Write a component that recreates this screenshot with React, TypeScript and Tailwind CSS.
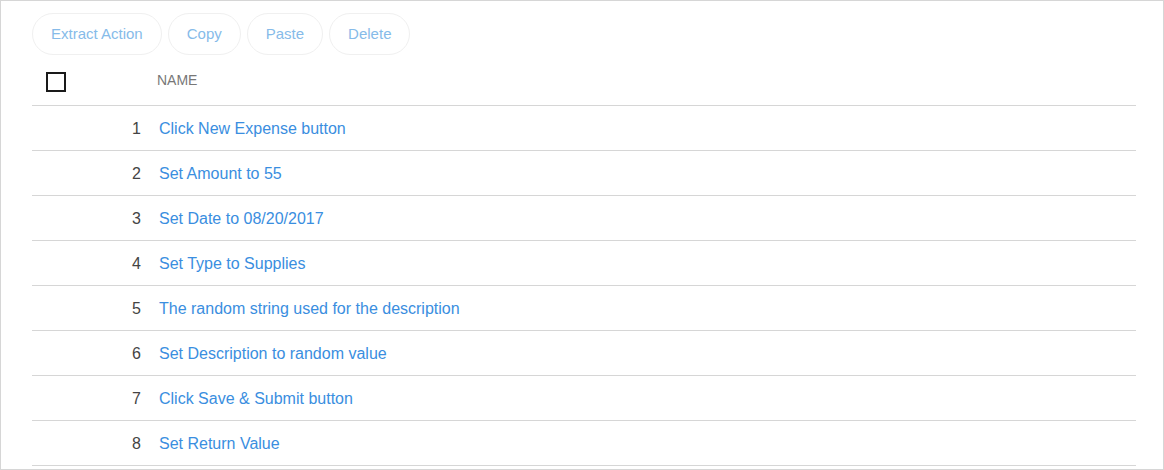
import React from "react"

const rows = [
    "Click New Expense button",
    "Set Amount to 55",
    "Set Date to 08/20/2017",
    "Set Type to Supplies",
    "The random string used for the description",
    "Set Description to random value",
    "Click Save & Submit button",
    "Set Return Value",
]

const actions = ["Extract Action", "Copy", "Paste", "Delete"]

export default function App() {
    return (
        <div className="w-[1164px] h-[470px] bg-white border border-[#d6d6d6] overflow-hidden" style={{ fontFamily: '"Liberation Sans", Arial, sans-serif' }}>
            <div className="flex gap-[6px] pl-[31px] pt-[12px]">
                {actions.map((a) =>
                    <button key={a} className="h-[42px] px-[18px] rounded-full border border-[#f0f0f0] bg-white text-[15px] text-[#86bbe9]">
                        {a}
                    </button>
                )}
            </div>
            <div className="ml-[31px] w-[1104px] mt-[4px]">
                <div className="flex items-center h-[47px] border-b border-[#d6d6d6]">
                    <div className="w-[125px] pl-[14px]">
                        <div className="w-[20px] h-[20px] border-2 border-[#1a1a1a] bg-white" />
                    </div>
                    <span className="text-[14px] text-[#777777] mb-[3px]">NAME</span>
                </div>
                {rows.map((item, index) =>
                    <div key={index} className="flex items-center h-[45px] pt-[2px] border-b border-[#d6d6d6]">
                        <span className="w-[109px] text-right text-[16px] text-[#444444]">{index + 1}</span>
                        <span className="ml-[18px] text-[16px] text-[#3a8ee0]">{item}</span>
                    </div>
                )}
            </div>
        </div>
    )
}
